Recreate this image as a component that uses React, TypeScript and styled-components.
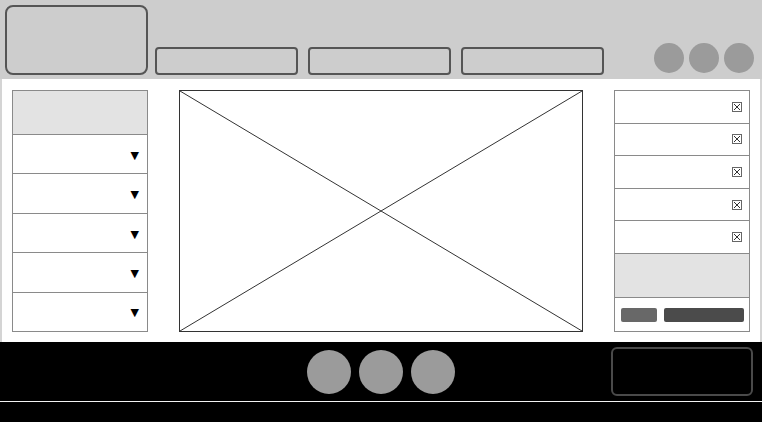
import React from 'react';
import styled, { createGlobalStyle } from 'styled-components';

const GlobalStyle = createGlobalStyle`
  html, body {
    margin: 0;
    padding: 0;
    background: #ffffff;
    font-family: 'Liberation Sans', Arial, sans-serif;
  }
  * {
    box-sizing: border-box;
  }
`;

const Page = styled.div`
  width: 762px;
  height: 422px;
  display: flex;
  flex-direction: column;
  overflow: hidden;
`;

const Header = styled.header`
  height: 79px;
  background: #cdcdcd;
  display: flex;
  align-items: flex-end;
  padding: 5px 8px 4px 5px;
`;

const Logo = styled.div`
  width: 143px;
  height: 70px;
  border: 2px solid #555555;
  border-radius: 8px;
  background: #cdcdcd;
`;

const Nav = styled.nav`
  display: flex;
  gap: 10px;
  margin-left: 7px;
`;

const NavButton = styled.div`
  width: 143px;
  height: 28px;
  border: 2px solid #555555;
  border-radius: 4px;
`;

const Spacer = styled.div`
  flex: 1;
`;

const Dots = styled.div<{ gap: number }>`
  display: flex;
  gap: ${(p) => p.gap}px;
`;

const Dot = styled.div<{ size: number }>`
  width: ${(p) => p.size}px;
  height: ${(p) => p.size}px;
  border-radius: 50%;
  background: #9b9b9b;
`;

const HeaderDots = styled(Dots)`
  margin-bottom: 2px;
`;

const Main = styled.main`
  height: 263px;
  background: #ffffff;
  border-left: 2px solid #d4d4d4;
  border-right: 2px solid #d4d4d4;
  padding: 11px 10px 10px 10px;
  display: flex;
  gap: 31px;
`;

const SidePanel = styled.div`
  width: 136px;
  border: 1px solid #8a8a8a;
  display: flex;
  flex-direction: column;
`;

const GreyCell = styled.div<{ h: number }>`
  height: ${(p) => p.h}px;
  flex: none;
  background: #e3e3e3;
`;

const MenuRow = styled.div`
  flex: 1;
  border-top: 1px solid #8a8a8a;
  display: flex;
  align-items: center;
  justify-content: flex-end;
  padding: 2px 8px 0 0;
`;

const Caret = styled.span`
  font-family: 'DejaVu Sans', sans-serif;
  font-size: 11px;
  color: #000000;
  line-height: 1;
`;

const ImageBox = styled.div`
  width: 404px;
  border: 1px solid #333333;
  svg {
    display: block;
    width: 100%;
    height: 100%;
  }
`;

const ListRows = styled.div`
  height: 163px;
  display: flex;
  flex-direction: column;
  border-bottom: 1px solid #8a8a8a;
`;

const ListRow = styled.div`
  flex: 1;
  display: flex;
  align-items: center;
  justify-content: flex-end;
  padding-right: 7px;
  & + & {
    border-top: 1px solid #8a8a8a;
  }
`;

const ButtonRow = styled.div`
  flex: 1;
  border-top: 1px solid #8a8a8a;
  display: flex;
  align-items: center;
  padding: 0 5px 0 6px;
  gap: 7px;
`;

const Btn = styled.div<{ w: number; tone: string }>`
  width: ${(p) => p.w}px;
  height: 14px;
  border-radius: 2px;
  background: ${(p) => p.tone};
`;

const Footer = styled.footer`
  height: 59px;
  background: #000000;
  display: grid;
  grid-template-columns: 1fr auto 1fr;
  align-items: center;
`;

const FooterBox = styled.div`
  justify-self: end;
  margin-right: 9px;
  width: 142px;
  height: 49px;
  border: 2px solid #4a4a4a;
  border-radius: 6px;
`;

const Rule = styled.div`
  height: 1px;
  background: #f2f2f2;
`;

const BottomBar = styled.div`
  flex: 1;
  background: #000000;
`;

const CloseIcon = () => (
  <svg width='10' height='10' viewBox='0 0 10 10'>
    <rect x='0.5' y='0.5' width='9' height='9' fill='none' stroke='#666' />
    <path d='M2 2 L8 8 M8 2 L2 8' stroke='#333' strokeWidth='1' />
  </svg>
);

export default function App() {
  return (
    <Page>
      <GlobalStyle />
      <Header>
        <Logo />
        <Nav>
          <NavButton />
          <NavButton />
          <NavButton />
        </Nav>
        <Spacer />
        <HeaderDots gap={5}>
          <Dot size={30} />
          <Dot size={30} />
          <Dot size={30} />
        </HeaderDots>
      </Header>

      <Main>
        <SidePanel>
          <GreyCell h={43} />
          {[0, 1, 2, 3, 4].map((i) => (
            <MenuRow key={i}>
              <Caret>▼</Caret>
            </MenuRow>
          ))}
        </SidePanel>

        <ImageBox>
          <svg viewBox='0 0 100 100' preserveAspectRatio='none'>
            <line x1='0' y1='0' x2='100' y2='100' stroke='#333' strokeWidth='1' vectorEffect='non-scaling-stroke' />
            <line x1='100' y1='0' x2='0' y2='100' stroke='#333' strokeWidth='1' vectorEffect='non-scaling-stroke' />
          </svg>
        </ImageBox>

        <SidePanel>
          <ListRows>
            {[0, 1, 2, 3, 4].map((i) => (
              <ListRow key={i}>
                <CloseIcon />
              </ListRow>
            ))}
          </ListRows>
          <GreyCell h={43} />
          <ButtonRow>
            <Btn w={36} tone='#686868' />
            <Btn w={80} tone='#4b4b4b' />
          </ButtonRow>
        </SidePanel>
      </Main>

      <Footer>
        <span />
        <Dots gap={8}>
          <Dot size={44} />
          <Dot size={44} />
          <Dot size={44} />
        </Dots>
        <FooterBox />
      </Footer>
      <Rule />
      <BottomBar />
    </Page>
  );
}
